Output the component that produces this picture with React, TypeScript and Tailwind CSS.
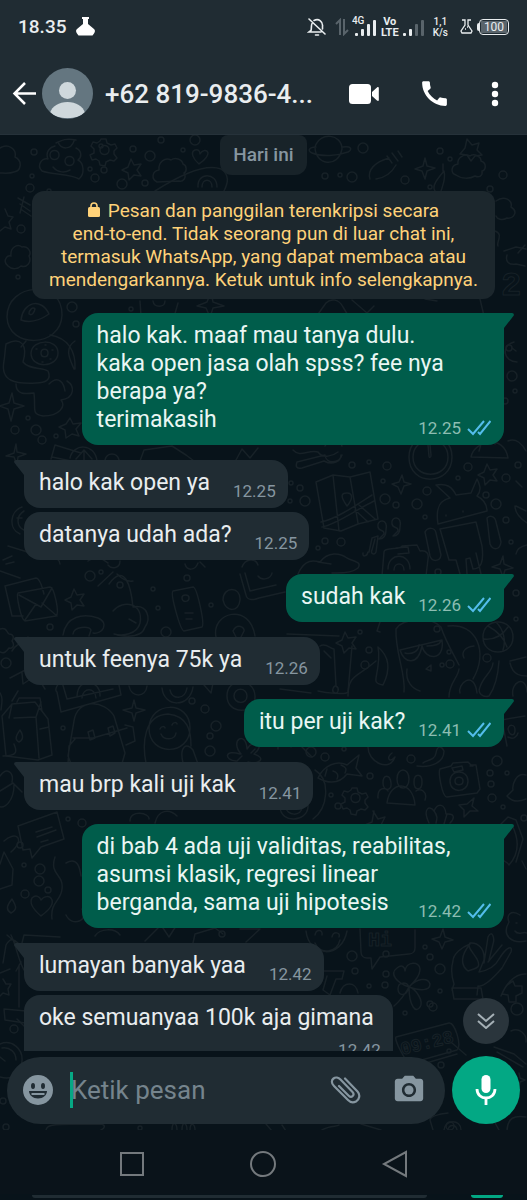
import type { ReactNode } from "react";
import { MdCameraAlt, MdCall } from "react-icons/md";

type Message = {
    lines: string[];
    time: string;
    sent?: boolean;
    tail?: boolean;
    wide?: boolean;
    timeBelow?: boolean;
};

const messages: Message[] = [
    {
        lines: ["halo kak. maaf mau tanya dulu.", "kaka open jasa olah spss? fee nya", "berapa ya?", "terimakasih"],
        time: "12.25",
        sent: true,
        tail: true,
        wide: true,
    },
    { lines: ["halo kak open ya"], time: "12.25", tail: true },
    { lines: ["datanya udah ada?"], time: "12.25" },
    { lines: ["sudah kak"], time: "12.26", sent: true, tail: true },
    { lines: ["untuk feenya 75k ya"], time: "12.26", tail: true },
    { lines: ["itu per uji kak?"], time: "12.41", sent: true, tail: true },
    { lines: ["mau brp kali uji kak"], time: "12.41", tail: true },
    {
        lines: ["di bab 4 ada uji validitas, reabilitas,", "asumsi klasik, regresi linear", "berganda, sama uji hipotesis"],
        time: "12.42",
        sent: true,
        tail: true,
        wide: true,
    },
    { lines: ["lumayan banyak yaa"], time: "12.42", tail: true },
    { lines: ["oke semuanyaa 100k aja gimana"], time: "12.42", timeBelow: true },
];

// x, y, radius of the loose dots between the doodles
const dots = [
    [34, 151, 3], [101, 145, 2], [133, 148, 3], [150, 155, 5], [161, 139, 3], [183, 149, 2], [195, 139, 5],
    [95, 177, 4], [104, 169, 3], [90, 168, 2], [122, 183, 5], [145, 182, 3], [30, 187, 4], [49, 190, 2], [32, 175, 2],
    [363, 147, 5], [352, 176, 5], [405, 179, 4], [325, 175, 3], [340, 174, 2], [430, 186, 2], [440, 150, 3],
    [450, 158, 2], [503, 174, 4], [490, 188, 3], [21, 228, 4], [18, 276, 2], [72, 306, 5], [76, 323, 3],
    [131, 308, 2], [509, 347, 3], [512, 375, 5], [515, 390, 2], [505, 400, 3], [28, 417, 2], [15, 429, 4],
    [36, 429, 5], [42, 439, 4], [56, 435, 2], [352, 464, 3], [369, 461, 2], [387, 465, 4], [383, 480, 2],
    [427, 490, 4], [468, 466, 4], [458, 477, 2], [506, 477, 4], [518, 464, 3], [291, 482, 2], [300, 487, 3],
    [305, 500, 5], [290, 500, 2], [385, 498, 5], [396, 504, 3], [417, 503, 5], [425, 516, 2], [486, 494, 3],
    [496, 503, 5], [506, 519, 3], [325, 540, 3], [341, 541, 4], [318, 547, 2], [511, 541, 2], [438, 571, 3],
    [516, 592, 3], [516, 618, 2], [50, 626, 3], [90, 575, 5], [101, 571, 2], [120, 584, 3], [153, 588, 2],
    [158, 607, 2], [211, 604, 2], [166, 631, 5], [187, 577, 3], [369, 649, 3], [360, 631, 2], [365, 664, 4],
    [437, 628, 3], [449, 651, 2], [450, 663, 4], [442, 664, 2], [487, 657, 4], [6, 662, 5], [192, 700, 3],
    [205, 708, 4], [210, 735, 3], [216, 725, 5], [63, 727, 2], [210, 750, 5], [311, 751, 5], [325, 756, 4],
    [344, 748, 2], [370, 775, 3], [411, 758, 4], [331, 794, 2], [338, 805, 3], [497, 760, 5], [490, 772, 3],
    [507, 772, 2], [491, 783, 3], [492, 797, 4], [503, 806, 2], [524, 817, 3], [68, 818, 2], [82, 822, 4],
    [20, 844, 3], [24, 864, 2], [40, 868, 5], [25, 893, 4], [48, 889, 3], [39, 880, 5], [222, 933, 3],
    [352, 955, 5], [386, 953, 3], [425, 946, 2], [430, 956, 3], [440, 968, 5], [355, 970, 3], [386, 973, 3],
    [369, 985, 2], [385, 984, 3], [440, 990, 2], [433, 1006, 4], [405, 1012, 2], [430, 1003, 3], [517, 1008, 6],
    [3, 1100, 3], [6, 1126, 3], [14, 1028, 4], [140, 1127, 2], [441, 1064, 3], [449, 1050, 2], [450, 1125, 4],
];

const doodles = [
    // clouds
    "M0 147c8-5 17 1 15 9 8 4 6 14-1 15-5 2-11 1-14 1",
    "M157 181c-6-3-5-11 2-12-1-8 6-13 12-10 4-3 11-1 12 4 4 1 4 8 1 9 3 5-1 9-5 8z",
    "M456 174c-6-2-5-10 2-11-1-6 6-11 12-8 4-3 11 0 11 5 6 2 5 9 1 10 1 5-3 7-7 5-5 3-14 3-19-1z",
    "M8 265c-6-5-1-11 3-10-1-8 6-13 11-9 6-1 10 5 7 9 3 6-2 12-8 10-3 3-9 4-13 0z",
    "M496 200c8-6 17-1 15 6 8 5 2 12-4 11-5 3-10 1-11-2",
    // swirl character with eyes
    "M42 170c-6-6 0-13 6-12-3-7 2-12 7-13M76 147c6 3 6 9 2 12 6 3 7 14 1 19-8-5-26-4-37-8M58 141c3 8 13 8 16-1M56 142c6-3 10-5 20-3M50 154c0-6 9-6 9 0s-9 6-9 0zM65 160c0-6 9-6 9 0s-9 6-9 0zM53 166c5 6 12 6 17 3",
    // gears
    "M101 138l5 0 1 4 4 2 4-1 2 4-3 3 0 3 3 4-3 3-4-1-4 2-1 4-5-1-1-4-3-2-4 1-2-5 4-2 0-4-3-3 2-4 4 1 3-2zM100 149c0-6 9-6 9 0s-9 6-9 0z",
    "M352 787l5 0 1 4 4 2 4-1 2 4-3 3 0 3 3 4-3 3-4-1-4 2-1 4-5-1-1-4-3-2-4 1-2-5 4-2 0-4-3-3 2-4 4 1 3-2zM351 797c0-6 9-6 9 0s-9 6-9 0z",
    "M0 628c7-2 6 3 9 5 5 0 5 4 3 7 3 4 1 8-3 7-3 4-5 6-9 4",
    // planet
    "M315 146c5-16 27-13 27 2-4 20-27 16-27-2zM316 146c-7 0-9 4-4 6 10 4 25 3 36-1 5-3 3-6-5-5",
    // rocket and telescope
    "M370 178c-3-9 5-17 19-21M376 178c7-1 15-5 20-14M387 155l5 7M392 152l6 8M398 150l4 6",
    "M155 190c25-16 50-28 66-22 9 6 7 14 3 22M198 186c-1-15 19-15 19 0M202 186c0-9 10-9 10 0",
    "M18 197l12 7M20 203l10 7M22 209l9 6M24 196l-4 16",
    "M435 190c-4-5 4-14 9-20 2 7-1 14-3 20M443 170v-7",
    // hearts
    "M199 163c-6-5-9-12-4-14 4-1 5 2 5 4 2-4 7-5 8-1 0 5-5 8-9 11z",
    "M41 915c-7-6-12-13-9-18 4-4 8-1 9 2 3-4 9-5 11 0 2 6-6 12-11 16z",
    // stars
    "M131 158l3 6 7-1-4 6 4 6-7-1-5 5-1-7-6-3 6-3z",
    "M467 138l5 6 7-2-2 7 5 5-7 1-4 5-4-6-7-1 5-6z",
    "M487 463l3 6 7-1-4 6 4 6-7-1-5 5-1-7-6-3 6-3z",
    "M70 417l3 6 8-1-5 6 3 7-7-2-6 4-1-8-6-3 7-3z",
    "M74 588l3 6 7-1-4 6 4 6-7-1-5 5-1-7-6-3 6-3z",
    "M345 631l3 6 8-1-4 6 4 6-7-1-5 5-2-7-6-3 6-3z",
    "M5 208l3 7 5 1-4 5 2 7-6-2-5 4M3 978l3 5 5 0-3 5 1 6-6-2-3 3",
    // sparkles
    "M425 157l2 8 8 2-8 3-2 8-3-8-7-2 8-3z",
    "M12 392l2 10 10 3-10 3-3 12-3-12-9-3 10-3z",
    "M211 291l2 10 11 4-11 2-3 9-4-9-9-2 10-4z",
    "M402 474l2 7 7 2-7 2-3 8-3-7-6-3 7-2z",
    "M503 555l1 8 9 4-8 2-2 7-3-8-8-2 8-3z",
    "M134 699l2 8 9 2-9 3-2 8-2-8-9-3 9-2z",
    "M474 797l-2 8 6 5-8 0-6 6 0-7-5-5 8-1z",
    "M443 928l2 8 8 3-8 2-3 7-3-7-7-3 8-2z",
    "M16 443l1 8 9 2-8 3-1 8-3-8-8-1 8-3zM519 1072l1 5 5 2-5 2-1 5",
    // balloon, bear and plush figures
    "M7 316c0-35 56-38 55-2-1 33-54 34-55 2zM21 319c2-18 20-23 28-6-10 7-20 9-28 6zM29 313c0-4 4-8 6-5-1 4-3 7-6 5zM26 340l-5 6",
    "M6 343c15-8 22 1 17 18 6 8 20 5 25 9 4 9-3 12-12 12-20 1-36-1-32-22 1-6 1-11 2-17zM31 352c1-14 27-15 27 0s-27 16-27 0zM41 352c0-5 7-5 7 0s-7 5-7 0zM36 348h1M45 344h1M52 349h1M50 358h1M42 361h1M50 334c18 3 26 16 25 34M16 383c0 11 9 10 18 9 2 17-3 21 9 23 17 0 23-10 18-16 14-2 14-14 6-19M49 383c10-10 15 0 16 7M75 340c-12 8-4 20-1 28",
    // blocks behind the balloon
    "M140 300l1 15 33 1 4-14M153 300c1 7 12 7 12 0M316 316l10-14c5-5 13-4 17 4l6 10M352 299l15 13 7-7M480 298l4 17M425 298l12 2",
    "M504 250l12-4 10 2M507 254c-2 7 2 10 9 9l9 2M514 341c-14 4-10 20 3 20M512 347l4 3M525 244l-7 8M495 230c9 3 1 11 3 15",
    // party hat, laptop, bowling items under the first message
    "M51 458l4-14 26 8M52 456l24 5M70 457c3-15 25-15 27 3M76 458l8-9 8 9M84 449v10M140 460l4-11 28-4 14 9 8 6M105 459c2-8 12-8 14 0M236 459l6-11 8 9 8-10",
    // pliers
    "M293 449c7 8 16-1 25 2 5 7 15 4 20 0M297 461l28-7c1 9 14 9 17 0M297 461c-2 5 0 7 5 6l22-7c9 5 17 0 17-6M325 445c4-7 15-6 17 0",
    // stopwatch
    "M409 456c0-28 43-29 43 0s-43 30-43 0zM413 456c0-22 35-23 35 0s-35 23-35 0zM428 444l1 11c0 2 2 2 2-1l-1-10",
    // dome and bell
    "M471 456c3-16 33-24 37 1zM479 450l3-10M495 443l5-6M508 440c8-4 15 4 18 10M516 480l6 6M516 505l10 5M515 505c0 7 6 13 12 17M516 553c1-6 6-8 11-9",
    // map with a pin
    "M316 481l17-7 17 2 20-5 8 47-20 5-17 7-17-3zM333 474l6 56M350 476l8 46M321 521c15-3 34-16 51-27M322 526c15-3 30-15 52-26M359 504l16 14M355 509l13 12M347 505c-7-10-6-13 0-13s6 6 0 13z",
    // quotes and notes
    "M386 529c3-12-10-11-8-3 1 5 7 2 6 7l-5 5c5 0 7-4 7-9zM400 526c3-12-10-11-8-3 1 5 7 2 6 7l-5 5c5 0 7-4 7-9zM369 551l3-14 6-2-2 16c-2 4-6 1-4-2l3-11M363 552c-1 4 4 4 5-1",
    // robot
    "M438 523c-3-18 3-24 12-26l-14-13c11-2 16 2 20 10l15-2 6-14c4 8 4 12 0 17 6 3 10 8 10 15zM446 514v1M463 510v1M440 528l36-7 6 24c2 16-1 23-9 23l-3-11-4 1 1 15M440 528l9 31 7 0 4 14M476 552l5 21M425 531c3-5 10-5 11 1l5 22c-1 7-9 7-11 1zM487 517c3-3 8-2 9 4l5 20c-1 8-8 9-11 2z",
    // instant camera and shoe
    "M382 575l2-24c0-5 17-2 18-6l15-1 3 6c7-1 9 3 8 8l-2 17M388 568c0-17 22-17 22 0M394 569c0-8 10-8 10 0M396 547l12-1 1 6-11 1M298 573c7-17 18-13 22-12 8-11 20-9 27-4 8 4 15 4 11 10-7 6-22 5-26 5M318 561l13 2M242 566c3-8 13-10 16-2",
    // letters and envelopes
    "M5 585l31-8c4 0 7 12 8 16M5 585l7 30 11 0M18 592l32-6c4 0 10 26 6 29l-31 5c-4-1-9-26-7-28zM19 594l22 12 11-19M25 619l11-16M57 615l-15-13",
    "M8 545l26 8 9-8M6 563l8-2M12 700l6-10M0 570l20 7M42 554c10 5 17 1 18 9M88 560c10-7 15-1 20 2M86 552c2 5 3 7 8 6M108 564c4 5 12 3 12-4M185 563c2 7 10 7 13-1M200 561l5 5",
    // ship wheel behind the left bubbles
    "M22 506c-12 4-14 22-2 27M24 510c-8 5-8 15 0 19M17 517l5 0M3 559l9-4",
    // turtle
    "M63 634c3-19 20-22 35-17 12 5 4 17-5 15M73 633c1-8 16-8 18-4l-2 6M109 583c16-22 22 3 24 23 15-3 18 12 12 20-3 10-17 10-28 8M98 585l15-14M113 610c10-12 31-8 27 12-3 12-18 13-26 11M129 618l7 4M117 573c5 5 10 8 16 7",
    // smartphone and figures
    "M173 590l20-4c4 0 12 37 9 40l-18 4c-4-1-14-38-11-40zM182 597c0-4 7-4 7 0s-7 5-7 0zM185 612h8M186 618h6M240 573l6 21c1 6 8 5 13 3l26-6M245 572l5 18 26-6M258 575c4 5 13 3 14-3M223 599c0-14 18-14 17 0-1 12-14 13-17 0zM216 636c-5-25 34-35 39-1M233 630c4-8 12-4 11 0l-3 6M233 630l3 6",
    // trophy card with a star
    "M287 633l52 2M352 645l-4 46c-2 3-22 1-30-1M320 645c6-4 10 3 14 3l2 37c4 2 2 8-1 7-4-1-2-6 0-7M324 650l7 7M280 688l31 4",
    // masked head and octopus
    "M396 628c-1 24 10 44 8 63M396 628c7-11 35-13 45-2 4 13 13 28 18 38M400 649l42-10c3 22-17 20-20 6-4 20-18 18-22 4zM405 652c7 2 14-2 14-8M427 645c8 0 13-2 14-5M380 631l-3-1 4-12 8-2M426 668l5-4 0 6zM420 690c-7-2-15-9-13-22M378 646c12 10 12 24 5 38-5-1-8-2-7-7 2-10 4-22 2-31zM376 660c-18 16-28 13-28 35M448 625c28-4 41 26 25 53M474 645c-9 1-13 6-10 12M499 660c-1 16-5 28-10 35-6 2-12-3-9-9 4-12 12-14 13-24M460 692c-3-9 14-24 17 0M449 696c0-14 9-19 10-28",
    // basketball
    "M483 636c0-20 30-20 30 0s-30 20-30 0zM488 625c11 6 17 15 19 21M484 638c10 1 18-3 24-12M496 621c8 8 10 19 7 28M510 660l16-4M510 662c3 13 12 13 17 13M513 695c-3-14 13-22 14-4M501 719l24-4M502 719l5 26M508 728c1-5 7-5 7 1s-5 7-7-1M508 736c5 3 9 0 10-4",
    // left side arrow and bear hand
    "M28 636l4 9 10 4M25 645c-5-5-10 0-13 5M10 677l21-11 14 22M22 672l1 11 9-6M0 692c3 5 2 9 1 17M3 755c15 0 14-5 11-12",
    // milk carton
    "M12 703l23-2 13 17 4 36-14 5-32-4-4-40zM14 717l22-1 3 41M12 703l-3 14M17 701l2-4 21 0 2 13M36 716l5-15M19 741c-6-3-1-9 1-12 2 3 5 9-1 12zM40 728l9-2",
    // backpack with a roll
    "M57 691c-3-2 1-10 5-10l5 17 46-10M57 691l4 20 60-17-2-10M77 695c1-20 24-16 23 0M82 697c1-11 13-11 14 0M68 755l6-35c3-23 31-21 40-5l11 37-4 14-46 7zM73 737l20 0 34-10M88 731l5-2 2 8-5 2zM108 727l5-2 2 7-5 3zM125 724l8 2 2 14-9 4M75 738l-6 7-1 18",
    "M129 685c2 12 17 12 18 0M162 687c2 20 28 20 31-1M170 689c2 10 15 10 17-2M204 684l7 8 2-10M227 695c0-19 27-19 28 0s-28 19-28 0zM234 695c0-9 13-9 13 0s-13 8-13 0z",
    // smiling astronaut
    "M149 727c1-27 41-28 41 0s-41 29-41 0zM146 762c-4-20-2-48 22-49 20 2 23 17 23 32M160 728c1-3 5-3 5-1M172 724c1-3 5-3 5-1M161 733c3 7 14 6 15-1M183 762c-4-17 4-21 10-13l5 14",
    // flower
    "M241 753c-12-14 5-24 6-5 7-12 19-4 7 5 13 4 5 11-6 8M240 753c-16-5-16 6-4 7M242 755l-5 5M251 752l4-4M38 768c11-7 30-6 20 4M0 775c7-10 14-3 12 6M0 790l13-8 9 9M14 784c0 15-9 25-16 21M4 840c12-11 22-2 7 11",
    // fish
    "M318 777c6-13 19-18 29-13l12-10-3 13 6 8-15-2c-7 9-16 11-29 4zM325 775l2-7M333 770c4 1 6 4 4 8M341 764c5 2 6 4 4 8M368 745c-1 16 22 27 27 11-6 7-9 0-3-4M417 765c15 2 27-4 27-15-3-6-7-5-8 2-1 8-10 7-13 10",
    // camera
    "M440 768l11-3 2-3 15-1 3 3 5 0 4 24-3 4-30 4c-5 0-9-25-7-28zM450 780c0-12 18-12 18 0s-18 13-18 0zM455 780c0-5 8-5 8 0s-8 5-8 0zM452 767l10-2 1 4-9 2zM470 765h3",
    // people
    "M387 802c3-23 26-23 28 2zM397 778c0-12 12-12 12 0s-12 12-12 0zM383 782c0-9 7-9 8 0s-8 8-8 0zM414 781c0-9 8-9 8 0s-8 9-8 0zM378 797c-1-11 8-11 10-7M425 799c3-9-5-12-9-9M526 774c-10-3-14 10-13 15l-6 6c5 6 12 6 19 3",
    // donut and waves
    "M291 746c-1-11-14-6-13 2M300 744l12 12M280 806c0-20 28-20 28 0-1 15-27 17-28 0zM286 806c0-10 16-10 16 0s-16 9-16 0zM315 769c16 10 13 38-2 49M130 820c0-12 20-8 19-2M155 822c3-13 14-15 22-7M373 810l5 8 7-2-4 8M374 810l-2 11-7 3",
    "M429 822c-7-15 1-18 5-12 4-9 11-7 12 3 10-1 8 5 4 9M434 810c4 5 3 8 2 12M447 813l-3 10M500 824l8-8 8 3 7 19-7 23M512 824c9 18 5 31-3 40-2-5-8-2-7-10M522 860l4 8",
    // note card and slippers
    "M18 825l39-14 7 27-23 8-9 11-2-9-7 1zM36 831l16-5M37 836l19-7M41 841l7-2M0 863l4-12 9 17-1 16-12 4M55 856c-6 18 9 17 7 32-1 12-12 13-10 30M66 914c6 13 24 5 16-6M66 862c12-7 14 6 15 13M11 912c-7-4-2-10 1-14 4 7 6 10-1 14z",
    "M22 942l2-8 36 2M20 944c-7-7-10-7-14 0l-3 18M11 934c6 12 8 30 15 38M0 972l10-4M16 970l5-9M4 1008l22 2M4 1008l1 11 20 3M19 964v42M7 934l8 7M95 935c5-8 20-8 25-1M145 940l16-16 8 12 7-11",
    // left watch
    "M0 1043c12-5 23 5 22 17-1 11-7 20-22 16M2 1047c8-1 14 4 14 12M0 1056l5 4M17 1018l8 8",
    // chess letters and right-hand emojis
    "M193 942l2-9 20-6 8 6M240 928l20 0-14 13M306 930c3 27 36 28 41 0M315 934c1-6 8-6 7 0M332 936c1-6 9-5 7 0M315 942c5 12 22 10 25-3M324 970l20 0-2 8-6 0-6 16-7-5 4-14M340 992c3-12 16-12 18 0",
    // chat bubble
    "M360 928l1 23c0 4 3 6 6 6l4 0 1 11 8-12 29-3c4 0 6-3 6-6l0-18",
    // clover
    "M409 986c-12-4-20-13-12-19 5-4 8-1 8 3 1-10 15-10 15-2 0 7-6 13-11 18 8-9 19-10 21-3 0 7-10 7-21 3 7 2 15 14 11 20-4 7-11-1-11-20-2-5-11-6-11 2s9 7 11-2M409 986c-5 9-8 13-15 19",
    // hand with plant
    "M452 989l2-6c-3-9-3-16-1-23 0-7 9-14 17-17-9 11-10 21-2 27 10-3 13-4 9-12-5-8-10-12-7-16 8-1 15 6 14 17l-5 12c11-2 17-7 20-13 8-13 14-14 12-7l-9 16c-13 15-20 19-24 18l-1 9M484 962l4-26c4-8 7 1 5 7l-4 16M488 961l14-17M452 987l29 0 2 11-29 0zM520 914c-9-6-14 0-11 7-8 14 3 22 17 19M516 922h1M515 930c3 5 8 0 12 2",
    // game controller
    "M501 995c4-10 13-23 25-22M506 985l7-5 2 5 7 0 0 7-6 3 0 6-7 0-1-7-6-1z",
    // alarm clock
    "M396 1036l53-14c6-1 13 23 8 27l-46 13c-6 0-17-24-15-26zM402 1062l7 5 48-14M494 1046l20 7 12 10M497 1051l26 15M511 1030c8-4 16 3 15 11",
    // strip below the composer
    "M46 1129c1-6 7-6 55-6 5 1 4 4 0 6M172 1129c0-10 5-7 5 0M182 1129c0-10 5-7 5 0M190 1129c0-9 5-6 5 0M266 1123l6 7M282 1124l4 6M322 1129c8-5 15-3 17-5M361 1123l20 6M433 1129l-3-10c0-4 8-5 11-6l7-1M444 1129c1-11 17-11 17 0M448 1129c1-6 8-6 9 0M494 1120l5 9M507 1129c1-12 7-15 19-13M452 1042l14 12",
];

function Wallpaper() {
    return (
        <svg
            className="absolute inset-0 w-full h-full"
            viewBox="0 134 527 996"
            preserveAspectRatio="xMidYMin slice"
            fill="none"
            stroke="#172127"
            strokeWidth="1.5"
            strokeLinecap="round"
            strokeLinejoin="round"
            aria-hidden="true"
        >
            {doodles.map((d) => (
                <path key={d} d={d} />
            ))}
            {dots.map(([x, y, r]) => (
                <circle key={`${x}-${y}`} cx={x} cy={y} r={r} />
            ))}
            <g strokeWidth="1" fontFamily="Liberation Mono, monospace" fontWeight="700">
                <text x="368" y="945" fontSize="20">Hi</text>
                <text x="402" y="1054" transform="rotate(-14 402 1054)" fontSize="18">09:28</text>
                <text x="501" y="294" fontSize="34">2</text>
            </g>
        </svg>
    );
}

function Signal({ level }: { level: number }) {
    return (
        <svg width="22" height="18" viewBox="0 0 22 18" aria-hidden="true">
            {[3, 7, 12, 16].map((h, i) => (
                <rect key={h} x={i * 6} y={18 - h} width="3" height={h} rx="1" fill={i < level ? "#e9edef" : "#59646b"} />
            ))}
        </svg>
    );
}

function StatusBar() {
    return (
        <div className="h-[53px] flex items-center justify-between px-[18px] text-[#e9edef]">
            <div className="flex items-center gap-[10px]">
                <span className="text-[19px] leading-6 font-medium">18.35</span>
                <svg width="19" height="19" viewBox="0 0 19 19" fill="#fff" aria-hidden="true">
                    <path d="M6 0h7v2h-1v5l6 5c1.500 1.300 1 3 0 4.500L16.500 18.500h-14L1 16.500c-1-1.500-1.500-3.200 0-4.500l6-5V2H6z" />
                </svg>
            </div>
            <div className="flex items-center">
                <svg className="mr-2" width="20" height="20" viewBox="0 0 20 20" fill="none" stroke="#e9edef" strokeWidth="1.6" strokeLinecap="round" aria-hidden="true">
                    <path d="M2 2l16 15M5 6.500c-1 2-.3 5-1 7L2 15h12M7 3.500C12 1 16 5 15.500 9v3M8.500 18h3" />
                </svg>
                <svg className="mr-[6px]" width="14" height="18" viewBox="0 0 14 18" fill="none" stroke="#59646b" strokeWidth="2" aria-hidden="true">
                    <path d="M5 17V2L1 6M9 1v15l4-4" />
                </svg>
                <div className="relative mr-1">
                    <span className="absolute -left-[3px] -top-[2px] text-[10px] leading-[10px] font-medium">4G</span>
                    <Signal level={4} />
                </div>
                <span className="mr-1 flex flex-col items-center text-[11px] leading-[11px] font-bold">
                    <span>Vo</span>
                    <span>LTE</span>
                </span>
                <Signal level={2} />
                <span className="mx-2 flex flex-col items-center text-[10px] leading-[11px] font-medium">
                    <span>1,1</span>
                    <span>K/s</span>
                </span>
                <svg className="mx-1" width="13" height="15" viewBox="0 0 13 15" fill="none" stroke="#e9edef" strokeWidth="1.3" aria-hidden="true">
                    <path d="M2 1h3v5L1 12l1 2h9l1-2-4-6V1h3M5 10h1M7 8h1" />
                </svg>
                <span className="w-[2px] h-2 bg-[#e9edef] rounded-l-sm" />
                <span className="w-[30px] h-4 border border-[#e9edef] rounded-sm p-px flex">
                    <span className="grow flex items-center justify-center bg-[#59646b] text-[12px] leading-3">100</span>
                </span>
            </div>
        </div>
    );
}

function ChatHeader() {
    return (
        <div className="h-[81px] flex items-center pl-3 pr-7">
            <button className="flex items-center gap-[5px]" aria-label="Kembali">
                <svg width="25" height="25" viewBox="0 0 25 25" fill="none" stroke="#fff" strokeWidth="2.5" aria-hidden="true">
                    <path d="M13 2L2.500 12.500 13 23M2.500 12.500H24" />
                </svg>
                <svg width="51" height="51" viewBox="0 0 51 51" aria-hidden="true">
                    <clipPath id="avatar">
                        <circle cx="25.5" cy="25.5" r="25.5" />
                    </clipPath>
                    <g clipPath="url(#avatar)">
                        <rect width="51" height="51" fill="#647680" />
                        <circle cx="25.5" cy="22.5" r="8.5" fill="#cfd8dc" />
                        <path d="M8 45c2-7 9-11 17.500-11S41 38 43 45c-4 3-10 5-17.500 5S12 48 8 45z" fill="#cfd8dc" />
                    </g>
                </svg>
            </button>
            <h1 className="grow ml-3 text-[26px] leading-8 font-medium text-[#e9edef] whitespace-nowrap">
                +62 819-9836-4...
            </h1>
            <div className="flex items-center">
                <button aria-label="Panggilan video">
                    <svg width="30" height="20" viewBox="0 0 30 20" fill="#fff" aria-hidden="true">
                        <rect width="22" height="20" rx="3.5" />
                        <path d="M23 8l5-4.500c1-.8 1.800-.5 1.800.5v12c0 1-.8 1.300-1.800.5L23 12z" />
                    </svg>
                </button>
                <button className="ml-[39px]" aria-label="Panggilan suara">
                    <MdCall className="w-[33px] h-[33px] text-white" />
                </button>
                <button className="ml-10" aria-label="Opsi lainnya">
                    <svg width="8" height="26" viewBox="0 0 8 26" fill="#fff" aria-hidden="true">
                        <circle cx="4" cy="4" r="3.2" />
                        <circle cx="4" cy="13" r="3.2" />
                        <circle cx="4" cy="22" r="3.2" />
                    </svg>
                </button>
            </div>
        </div>
    );
}

function Checks() {
    return (
        <svg width="24" height="16" viewBox="0 0 24 16" fill="none" stroke="#53bdeb" strokeWidth="2" aria-hidden="true">
            <path d="M1 9l5 5L17 1M11 12l2 2L23.500 1" />
        </svg>
    );
}

function Bubble({ message }: { message: Message }) {
    const { lines, time, sent, tail, wide, timeBelow } = message;
    const side = sent ? "self-end pr-[13px] bg-[#005d4b] text-[#e9f6f3]" : "self-start pr-3 bg-[#202c33] text-[#e9edef]";
    const corner = !tail ? "mt-1" : sent ? "rounded-tr-none mt-[14px]" : "rounded-tl-none mt-[15px]";
    const lastLine = lines[lines.length - 1];
    return (
        <li className={`relative flow-root rounded-2xl pl-[15px] pt-[9px] pb-[7px] text-[23px] leading-7 ${side} ${corner} ${wide ? "w-[88%]" : ""}`}>
            {tail && (
                <svg
                    className={sent ? "absolute top-0 left-full" : "absolute top-0 right-full -scale-x-100"}
                    width="10"
                    height="15"
                    viewBox="0 0 10 15"
                    fill={sent ? "#005d4b" : "#202c33"}
                    aria-hidden="true"
                >
                    <path d="M0 0h8c2 0 2.500 2 1 3.500L0 15z" />
                </svg>
            )}
            {lines.slice(0, -1).map((line) => (
                <span key={line} className="block">{line}</span>
            ))}
            <span className={timeBelow ? "block pr-[7px]" : ""}>{lastLine}</span>
            <span
                className={`float-right flex items-center gap-[6px] text-[17px] leading-5 ${timeBelow ? "mt-2" : "mt-3"} ${sent ? "ml-[13px] text-[#8dbdb2]" : "ml-[23px] text-[#8696a0]"}`}
            >
                {time}
                {sent && <Checks />}
            </span>
        </li>
    );
}

function Key({ label, children }: { label: string; children: ReactNode }) {
    return (
        <button aria-label={label}>
            <svg width="28" height="28" viewBox="0 0 28 28" fill="none" stroke="#74797d" strokeWidth="2" aria-hidden="true">
                {children}
            </svg>
        </button>
    );
}

function Composer() {
    return (
        <div className="relative flex items-center gap-[7px] px-[7px] pt-[5px] pb-[6px]">
            <div className="grow min-w-0 h-[67px] bg-[#202c33] rounded-full flex items-center pl-4 pr-[19px]">
                <button aria-label="Emoji">
                    <svg width="30" height="30" viewBox="0 0 30 30" aria-hidden="true">
                        <circle cx="15" cy="15" r="15" fill="#8696a0" />
                        <ellipse cx="10" cy="11" rx="2" ry="3" fill="#202c33" />
                        <ellipse cx="20" cy="11" rx="2" ry="3" fill="#202c33" />
                        <path d="M6 16h18c0 4-4 7.500-9 7.500S6 20 6 16z" fill="#202c33" />
                        <path d="M8.500 18h13v2h-13z" fill="#8696a0" />
                    </svg>
                </button>
                <div className="relative grow min-w-0 ml-[18px]">
                    <input
                        className="block w-full h-9 text-[26px] leading-9 text-[#e9edef] placeholder:text-[#75848d] outline-none"
                        type="text"
                        aria-label="Ketik pesan"
                        placeholder="Ketik pesan"
                    />
                    <span className="absolute -left-px top-0 w-[3px] h-9 bg-[#06a884]" />
                </div>
                <button aria-label="Lampirkan">
                    <svg width="31" height="28" viewBox="0 0 31 28" fill="none" stroke="#8696a0" strokeWidth="2.2" strokeLinecap="round" aria-hidden="true">
                        <path d="M15 2.500L27.500 15.500c3 3.200 2 8-1.500 10-3 1.500-6 .6-8-1.500L4 10C1 7 1.500 4 3.500 2.500s5-1 7 1L22.500 16c1.300 1.400 1.200 3 .2 4s-2.700 1-4-.3L9 10" />
                    </svg>
                </button>
                <button className="ml-[31px]" aria-label="Kamera">
                    <MdCameraAlt className="w-[34px] h-[34px] text-[#8696a0]" />
                </button>
            </div>
            <button className="w-[68px] h-[68px] shrink-0 rounded-full bg-[#03a884] flex items-center justify-center" aria-label="Pesan suara">
                <svg width="22" height="30" viewBox="0 0 22 30" aria-hidden="true">
                    <rect x="6.5" y="0" width="9" height="18" rx="4.5" fill="#fff" />
                    <path d="M2 14c0 12 18 12 18 0M11 23v7" fill="none" stroke="#fff" strokeWidth="2.8" />
                </svg>
            </button>
        </div>
    );
}

export default function App() {
    return (
        <div className="h-screen flex flex-col overflow-hidden bg-[#08131a] font-[Roboto,sans-serif]">
            <header className="bg-[#202c33] border-b border-[#26323a]">
                <StatusBar />
                <ChatHeader />
            </header>
            <main className="relative grow min-h-0 flex flex-col">
                <Wallpaper />
                <div className="relative grow min-h-0 overflow-hidden flex flex-col">
                    <div className="self-center h-10 px-[13px] rounded-b-xl rounded-t-lg bg-[#182329] text-[#8696a0] text-[19px] leading-10 font-medium">
                        Hari ini
                    </div>
                    <p className="mt-4 mx-8 p-2 rounded-xl bg-[#1c272d] text-[#ffd279] text-[19px] leading-[23px] text-center">
                        <svg className="inline-block mr-2 -mt-1" width="12" height="15" viewBox="0 0 12 15" aria-hidden="true">
                            <rect y="5" width="12" height="10" rx="1.5" fill="#ffd279" />
                            <path d="M3 6V4c0-4 6-4 6 0v2" fill="none" stroke="#ffd279" strokeWidth="1.6" />
                        </svg>
                        Pesan dan panggilan terenkripsi secara
                        <br />
                        end-to-end. Tidak seorang pun di luar chat ini,
                        <br />
                        termasuk WhatsApp, yang dapat membaca atau
                        <br />
                        mendengarkannya. Ketuk untuk info selengkapnya.
                    </p>
                    <ul className="flex flex-col pl-6 pr-[23px]">
                        {messages.map((message) => (
                            <Bubble key={message.lines[0]} message={message} />
                        ))}
                    </ul>
                    <button
                        className="absolute right-[18px] bottom-[7px] w-[46px] h-[46px] rounded-full bg-[#2a353c] flex items-center justify-center"
                        aria-label="Ke pesan terbaru"
                    >
                        <svg width="18" height="16" viewBox="0 0 18 16" fill="none" stroke="#a5b0b6" strokeWidth="2" aria-hidden="true">
                            <path d="M1 1l8 7 8-7M1 8l8 7 8-7" />
                        </svg>
                    </button>
                </div>
                <Composer />
            </main>
            <nav className="h-16 shrink-0 flex items-center justify-around pt-1 px-[66px] bg-[#0a131a]">
                <Key label="Aplikasi terbaru">
                    <rect x="3" y="3" width="22" height="22" />
                </Key>
                <Key label="Beranda">
                    <circle cx="14" cy="14" r="12" />
                </Key>
                <Key label="Kembali">
                    <path d="M25 2v24L3 14z" />
                </Key>
            </nav>
            <div className="h-[6px] shrink-0 flex items-start pl-8 pr-6 pt-px bg-[#08131a]">
                <span className="grow h-[3px] rounded-b-full bg-[#202c33]" />
                <span className="ml-11 w-8 h-[3px] rounded-b-full bg-[#03a884]" />
            </div>
        </div>
    );
}
